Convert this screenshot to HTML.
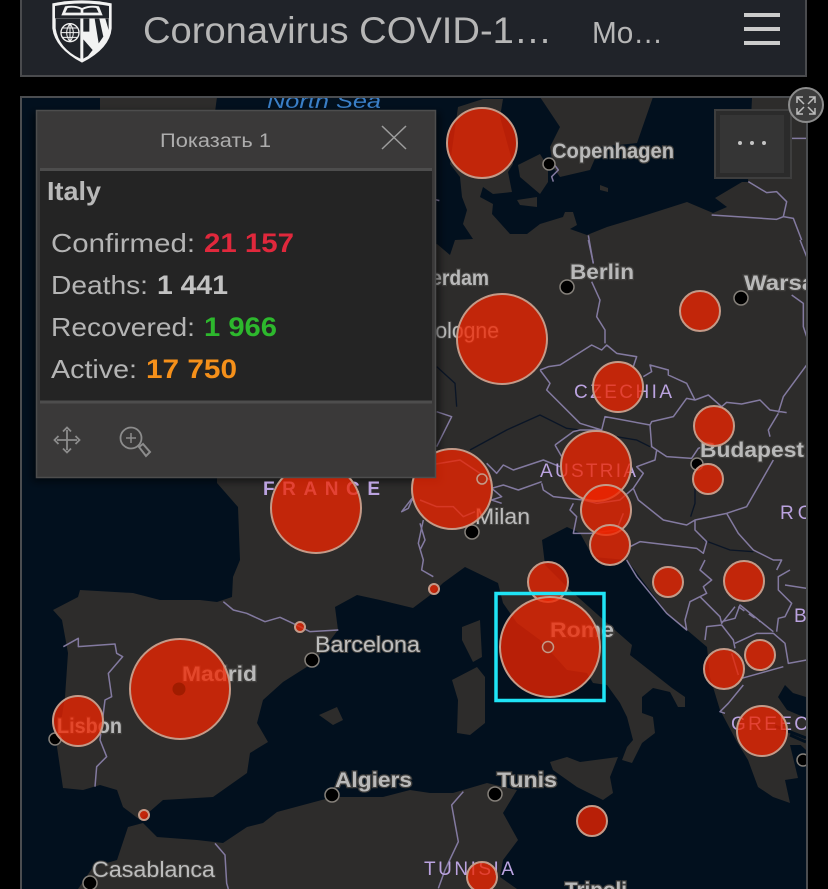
<!DOCTYPE html>
<html><head><meta charset="utf-8"><style>
html,body{margin:0;padding:0;background:#000;width:828px;height:889px;overflow:hidden}
svg{position:absolute;left:0;top:0;display:block}
text{font-family:"Liberation Sans",Arial,sans-serif}
.city{font-weight:bold;fill:#b9b9b9;stroke:#403f3d;stroke-width:2.5px;paint-order:stroke;font-size:21px}
.cityr{fill:#bdbdbd;stroke:#403f3d;stroke-width:2px;paint-order:stroke;font-size:22px}
.ctry{fill:#bba3e0;font-size:19px}
.b{fill:none;stroke:#837aa0;stroke-width:4.5;stroke-linejoin:round}
.riv{fill:none;stroke:#0a1526;stroke-width:4}
.c{fill:#ef2400;fill-opacity:.77;stroke:#c49a88;stroke-width:2}
.d{fill:#000;stroke:#85807a;stroke-width:1.5}
.pl{fill:#b4b4b4;font-size:26px}
.pn{font-size:27px;font-weight:bold}
</style></head><body>
<svg width="828" height="889" viewBox="0 0 828 889" xmlns="http://www.w3.org/2000/svg">
<defs>
<clipPath id="m"><rect x="22" y="98" width="784" height="791"/></clipPath>
<filter id="sh" x="-10%" y="-10%" width="120%" height="120%"><feGaussianBlur stdDeviation="4"/></filter>
</defs>
<rect width="828" height="889" fill="#000"/>

<!-- header -->
<rect x="21" y="-4" width="785" height="80" fill="#202329" stroke="#4a4b4e" stroke-width="2"/>
<g transform="scale(.3333)">
<path d="M157 10Q245-8 335 10V85Q330 145 246 188Q165 145 157 85Z" fill="#f2f2f2"/>
<path d="M165 18Q245 3 327 18V55H165Z" fill="#202329"/>
<path d="M184 46L195 19Q225 14 246 24Q268 14 297 19L308 46Z" fill="#f2f2f2"/>
<path d="M196 38L203 24Q225 20 242 29V38ZM250 38V29Q268 20 289 24L296 38Z" fill="#202329"/>
<path d="M167 56H241V176Q176 145 167 85Z" fill="#202329"/>
<circle cx="210" cy="98" r="27" fill="#202329" stroke="#f2f2f2" stroke-width="4"/>
<path d="M183 98H237M210 71V125M188 84H232M188 112H232M210 71Q190 98 210 125M210 71Q230 98 210 125" fill="none" stroke="#f2f2f2" stroke-width="3"/>
<path d="M250 56H326V85Q322 140 250 176Z" fill="#f2f2f2"/>
<path d="M250 56H268V95H250ZM284 56H298L310 110L296 130ZM316 56H326V90ZM250 118L278 150L264 168L250 176Z" fill="#202329"/>
</g>
<text x="143" y="43" font-size="37" fill="#b6b6b6" textLength="409" lengthAdjust="spacingAndGlyphs">Coronavirus COVID-1…</text>
<text x="592" y="43" font-size="31" fill="#b6b6b6" textLength="71" lengthAdjust="spacingAndGlyphs">Mo…</text>
<path d="M744 13h36v4h-36zM744 27h36v4h-36zM744 41h36v4h-36z" fill="#cbcbcb"/>

<!-- map -->
<rect x="21" y="97" width="786" height="800" fill="#02101e" stroke="#4b4d50" stroke-width="2"/>
<g clip-path="url(#m)">
<g fill="#2d2c2b">
<polygon points="100,97 217,97 215,112 100,112"/>
<polygon points="437,244 450,255 455,240 473,239 463,224 467,210 462,197 460,177 450,164 458,107 483,99 503,99 500,117 513,164 508,172 512,192 493,194 483,187 480,197 493,204 492,214 510,234 527,234 540,224 563,217 565,212 573,212 577,225 570,229 587,235 607,227 640,217 687,202 713,213 727,207 715,198 742,182 748,182 752,98 806,98 806,745 790,745 798,778 785,780 790,803 773,797 758,787 748,760 737,742 720,710 710,677 707,647 667,613 627,560 593,557 580,533 567,527 542,540 545,565 570,590 607,623 632,645 630,655 672,688 685,697 685,707 678,707 670,692 653,688 642,697 642,713 653,717 655,733 642,743 632,763 622,760 627,747 633,740 627,717 620,703 607,685 593,683 587,673 567,670 540,640 517,623 503,603 498,583 465,567 443,583 433,593 413,608 380,600 357,595 335,607 338,630 313,663 283,682 263,700 257,723 268,742 250,753 247,773 213,797 163,800 140,820 123,807 117,790 100,785 83,790 63,788 57,747 65,697 68,653 62,620 53,610 78,597 80,590 133,593 160,600 200,600 217,602 232,597 233,577 240,560 238,507 217,483 217,470 300,300"/>
<polygon points="143,823 157,837 197,840 223,843 247,827 263,823 277,812 333,797 383,797 410,790 430,793 453,793 487,783 517,790 503,813 518,840 503,860 500,877 517,889 78,889 93,867 117,860 128,827"/>
<polygon points="540,97 560,127 550,147 553,167 560,177 590,170 600,147 637,143 653,97"/>
<polygon points="518,165 540,154 548,167 548,182 540,194 520,177"/>
<polygon points="517,200 537,197 537,207 520,205"/>
<polygon points="600,185 608,188 608,192 600,190"/>
<polygon points="319,715 337,707 343,720 333,725"/>
<polygon points="462,627 480,620 482,657 473,662 462,640"/>
<polygon points="452,680 477,667 485,677 485,723 470,735 457,733 458,700"/>
<polygon points="550,762 567,757 580,762 618,757 610,777 613,793 603,800 577,787 553,770"/>
<polygon points="806,733 790,735 806,750"/>
</g>
<!-- inland seas -->
<polygon points="785,685 778,697 787,710 806,718 806,697 793,693" fill="#02101e"/>
<path d="M790 735L806 742M775 726L806 738" stroke="#02101e" stroke-width="3"/>

<!-- zoom4 borders -->
<g transform="translate(420,240) scale(.33333)">
<path class="riv" d="M50 380L105 430L110 500M150 630L260 570L360 525L440 565L480 570M590 590L650 600L690 620M825 740L825 790L812 830M850 900L930 930L1000 935"/>
<path class="b" d="M505 0L520 70M515 125L540 180L530 230L555 270L555 310M360 390L385 380L420 375L515 315L545 330L560 315L590 340L650 350L640 380M670 410L695 395L690 375L745 390L745 405L800 430L825 480L865 465L905 500L920 487L965 492L1020 480L1050 510L1100 518M1075 518L1090 470L1160 375M1050 590L1045 570L1075 520M360 390L390 430L380 450L480 550L545 570L555 530L690 555L695 545L760 530L800 475L825 480M690 555L695 620L740 650L815 655L835 625L850 620M695 620L710 630L705 660L650 680L670 700L640 745L655 780L730 840L800 855L825 840L920 820L980 800L1060 660M405 615L460 575L480 570L545 570M405 615L425 650M200 670L230 700L250 675L280 690L370 660L420 680M365 730L370 750L400 770L490 780L530 790L600 780L640 745M365 725L295 750L250 735L215 745L245 770L215 780L245 790M460 790L450 810L470 830L460 880L510 880L590 870L610 820M630 920L660 905L830 925L850 940L860 905L825 870L825 840M920 820L955 880L1000 930L1060 960L1085 960L1070 990M1115 165L1150 190L1150 260L1160 290M1140 0L1160 50M50 515L95 530L50 620M0 680L120 660L210 720M0 780L50 800L100 800L130 830L165 815M0 850L15 900L0 930"/>
</g>
<!-- zoom5 borders -->
<g transform="translate(420,560) scale(.33333)">
<path class="b" d="M620 0L650 50L740 160L800 210L795 180L810 125L840 110L900 170L905 190L945 140M855 0L840 30L875 60L850 80L860 100L830 115M1070 215L1075 175L1095 170L1115 130L1075 90L1075 50L1110 30M1095 75L1160 85M945 250L1010 220L1060 220L1095 250L1105 310L1160 300M855 240L860 200L905 195L940 240L945 265M965 355L1090 320M970 375L925 430L900 455L915 460M935 280L955 345M130 695L95 735L105 790L115 845L75 930L55 985M905 185L945 175L960 135L1060 215"/>
<path class="b" stroke-dasharray="22 16" d="M955 140L1020 185"/>
</g>
<!-- zoom6 borders -->
<g transform="translate(0,620) scale(.33333)">
<path class="b" d="M190 80L235 55L235 80L345 72L350 100L368 110L325 160L335 230L315 240L300 360L320 410L290 440L285 500M645 670L675 705L680 790L685 807"/>
</g>
<!-- zoom3 borders -->
<g transform="translate(0,380) scale(.33333)">
<path class="b" d="M670 665L700 690L740 700L795 725L840 712L900 740L930 755L1015 750M1270 420L1255 490L1270 540L1265 570L1300 590M1205 395L1240 350L1225 385Z"/>
</g>
<!-- zoom2 borders -->
<g transform="translate(440,0) scale(.33333)">
<path class="b" d="M925 545L980 578L1010 575L1040 605L1030 650L1060 655L1085 720M815 645L1010 658L1030 650M1055 415L1100 415M-50 590L-2 602"/>
<path class="b" stroke="#9d97b5" d="M340 490L355 510L335 530L340 545"/>
</g>
<path class="b" transform="translate(430,97) scale(.33333)" d="M475 415L490 500"/>

<!-- labels -->
<text x="267" y="108" font-size="20" font-style="italic" fill="#3a7fc8" textLength="114" lengthAdjust="spacingAndGlyphs">North Sea</text>
<text class="city" x="552" y="158" textLength="122" lengthAdjust="spacingAndGlyphs">Copenhagen</text>
<text class="city" x="570" y="279" textLength="64" lengthAdjust="spacingAndGlyphs">Berlin</text>
<text class="city" x="744" y="290" textLength="90" lengthAdjust="spacingAndGlyphs">Warsaw</text>
<text class="city" x="383" y="285" textLength="106" lengthAdjust="spacingAndGlyphs">Amsterdam</text>
<text class="cityr" x="420" y="338" textLength="79" lengthAdjust="spacingAndGlyphs">Cologne</text>
<text class="city" x="700" y="457" textLength="104" lengthAdjust="spacingAndGlyphs">Budapest</text>
<text class="cityr" x="475" y="524" textLength="55" lengthAdjust="spacingAndGlyphs">Milan</text>
<text class="cityr" x="315" y="652" textLength="105" lengthAdjust="spacingAndGlyphs">Barcelona</text>
<text class="city" x="182" y="681" textLength="75" lengthAdjust="spacingAndGlyphs">Madrid</text>
<text class="city" x="57" y="733" textLength="65" lengthAdjust="spacingAndGlyphs">Lisbon</text>
<text class="city" x="550" y="637" textLength="64" lengthAdjust="spacingAndGlyphs">Rome</text>
<text class="city" x="335" y="787" textLength="77" lengthAdjust="spacingAndGlyphs">Algiers</text>
<text class="city" x="497" y="787" textLength="60" lengthAdjust="spacingAndGlyphs">Tunis</text>
<text class="cityr" x="92" y="877" textLength="123" lengthAdjust="spacingAndGlyphs">Casablanca</text>
<text class="city" x="565" y="897" textLength="62" lengthAdjust="spacingAndGlyphs">Tripoli</text>
<text class="ctry" x="574" y="398" textLength="98">CZECHIA</text>
<text class="ctry" x="540" y="477" textLength="96">AUSTRIA</text>
<text class="ctry" x="780" y="519" letter-spacing="4">RO</text>
<text class="ctry" x="794" y="622">B</text>
<text class="ctry" x="731" y="730" textLength="92">GREECE</text>
<text class="ctry" x="424" y="875" textLength="90">TUNISIA</text>

<!-- city dots -->
<circle class="d" cx="549" cy="164" r="6"/>
<circle class="d" cx="567" cy="287" r="7"/>
<circle class="d" cx="741" cy="298" r="7"/>
<circle class="d" cx="697" cy="464" r="6"/>
<circle class="d" cx="472" cy="532" r="7"/>
<circle class="d" cx="312" cy="660" r="7"/>
<circle class="d" cx="55" cy="739" r="6"/>
<circle class="d" cx="332" cy="795" r="7"/>
<circle class="d" cx="495" cy="794" r="7"/>
<circle class="d" cx="90" cy="883" r="7"/>
<circle class="d" cx="803" cy="760" r="6"/>

<!-- panel shadow, below the labels that sit over it -->
<rect x="32" y="112" width="408" height="370" fill="#000" fill-opacity=".5" filter="url(#sh)"/>
<text class="ctry" x="263" y="495" font-weight="bold" font-size="20" textLength="117">FRANCE</text>

<!-- case circles -->
<circle class="c" cx="482" cy="143" r="35"/>
<circle class="c" cx="502" cy="339" r="45"/>
<circle class="c" cx="700" cy="311" r="20"/>
<circle class="c" cx="618" cy="387" r="25"/>
<circle class="c" cx="714" cy="426" r="20"/>
<circle class="c" cx="708" cy="479" r="15"/>
<circle class="c" cx="596" cy="466" r="35"/>
<circle class="c" cx="606" cy="510" r="25"/>
<circle class="c" cx="610" cy="545" r="20"/>
<circle class="c" cx="548" cy="582" r="20"/>
<circle class="c" cx="550" cy="647" r="50"/>
<circle class="c" cx="592" cy="821" r="15"/>
<circle class="c" cx="668" cy="582" r="15"/>
<circle class="c" cx="744" cy="581" r="20"/>
<circle class="c" cx="724" cy="669" r="20"/>
<circle class="c" cx="760" cy="655" r="15"/>
<circle class="c" cx="762" cy="731" r="25"/>
<circle class="c" cx="316" cy="508" r="45"/>
<circle class="c" cx="452" cy="489" r="40"/>
<circle class="c" cx="180" cy="689" r="50"/>
<circle class="c" cx="78" cy="721" r="25"/>
<circle class="c" cx="482" cy="877" r="15"/>
<circle class="c" cx="434" cy="589" r="5"/>
<circle class="c" cx="300" cy="627" r="5"/>
<circle class="c" cx="144" cy="815" r="5"/>
<circle cx="548" cy="647" r="5.5" fill="#a82a12" stroke="#c49a88" stroke-width="1.5"/>
<circle cx="482" cy="479" r="5" fill="#b52a10" stroke="#c49a88" stroke-width="1.5"/>
<circle cx="179" cy="689" r="6.5" fill="#a01c00"/>
<!-- selection -->
<rect x="496" y="593.500" width="108" height="107" fill="none" stroke="#1fe4f6" stroke-width="3.500"/>
</g>

<!-- more button -->
<rect x="715" y="110" width="76" height="68" fill="#2b2b2b" stroke="#3e3e3e" stroke-width="2"/>
<rect x="720" y="115" width="64" height="58" fill="#353535"/>
<circle cx="740" cy="143" r="2" fill="#c4c4c4"/><circle cx="752" cy="143" r="2" fill="#c4c4c4"/><circle cx="764" cy="143" r="2" fill="#c4c4c4"/>
<!-- expand -->
<circle cx="806" cy="105" r="17" fill="#3c3c3c" stroke="#8c8c8c" stroke-width="2"/>
<path d="M797 103V97H803M797 97L804 104M815 103V97H809M815 97L808 104M797 108V114H803M797 114L804 107M815 108V114H809M815 114L808 107" fill="none" stroke="#bdbdbd" stroke-width="1.500"/>

<!-- popup -->
<rect x="36.500" y="110.500" width="399" height="367" fill="#3a3939" stroke="#4d4d4d" stroke-width="1.500"/>
<rect x="40" y="170" width="392" height="231" fill="#242424"/>
<path d="M40 169.500H432M40 402H432" stroke="#4d4d4d" stroke-width="3"/>
<text x="160" y="147" font-size="19" fill="#adadad" textLength="111" lengthAdjust="spacingAndGlyphs">Показать 1</text>
<path d="M382 126L406 149M406 126L382 149" stroke="#9c9c9c" stroke-width="1.500" fill="none"/>
<text x="47" y="200" font-size="26" font-weight="bold" fill="#b9b9b9" textLength="54" lengthAdjust="spacingAndGlyphs">Italy</text>
<text class="pl" x="51" y="252" textLength="144" lengthAdjust="spacingAndGlyphs">Confirmed:</text>
<text class="pn" x="204" y="252" fill="#e0283c" textLength="90" lengthAdjust="spacingAndGlyphs">21 157</text>
<text class="pl" x="51" y="294" textLength="97" lengthAdjust="spacingAndGlyphs">Deaths:</text>
<text class="pn" x="157" y="294" fill="#c2c2c2" textLength="71" lengthAdjust="spacingAndGlyphs">1 441</text>
<text class="pl" x="51" y="336" textLength="144" lengthAdjust="spacingAndGlyphs">Recovered:</text>
<text class="pn" x="204" y="336" fill="#2db82d" textLength="73" lengthAdjust="spacingAndGlyphs">1 966</text>
<text class="pl" x="51" y="378" textLength="86" lengthAdjust="spacingAndGlyphs">Active:</text>
<text class="pn" x="146" y="378" fill="#f5901a" textLength="91" lengthAdjust="spacingAndGlyphs">17 750</text>
<g fill="none" stroke="#8c8c8c" stroke-width="1.800">
<path d="M67 430V450M57 440H77M63 431.500L67 427.500L71 431.500M63 448.500L67 452.500L71 448.500M58.500 436L54.500 440L58.500 444M75.500 436L79.500 440L75.500 444"/>
<circle cx="131" cy="438" r="10.500"/>
<path d="M126 438H136M131 433V443" stroke-width="1.500"/>
<path d="M139 447L143 444L150 452L146 456Z" stroke-width="2"/>
</g>
</svg>
</body></html>
